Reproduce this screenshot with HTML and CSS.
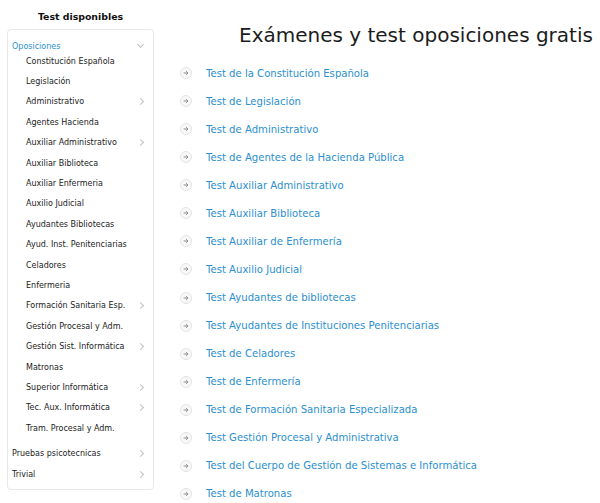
FILE: index.html
```
<!DOCTYPE html>
<html lang="es">
<head>
<meta charset="utf-8">
<title>Test disponibles</title>
<link rel="stylesheet" href="styles.css">
</head>
<body>
<div class="page">
  <aside class="sidebar">
    <h2 class="side-title">Test disponibles</h2>
    <div class="card">
      <div class="group">
        <div class="row top open"><span class="lbl blue">Oposiciones</span><span class="chev down"></span></div>
        <div class="sub">
          <div class="row"><span class="lbl">Constitución Española</span></div>
          <div class="row"><span class="lbl">Legislación</span></div>
          <div class="row"><span class="lbl">Administrativo</span><span class="chev"></span></div>
          <div class="row"><span class="lbl">Agentes Hacienda</span></div>
          <div class="row"><span class="lbl">Auxiliar Administrativo</span><span class="chev"></span></div>
          <div class="row"><span class="lbl">Auxiliar Biblioteca</span></div>
          <div class="row"><span class="lbl">Auxiliar Enfermeria</span></div>
          <div class="row"><span class="lbl">Auxilio Judicial</span></div>
          <div class="row"><span class="lbl">Ayudantes Bibliotecas</span></div>
          <div class="row"><span class="lbl">Ayud. Inst. Penitenciarias</span></div>
          <div class="row"><span class="lbl">Celadores</span></div>
          <div class="row"><span class="lbl">Enfermeria</span></div>
          <div class="row"><span class="lbl">Formación Sanitaria Esp.</span><span class="chev"></span></div>
          <div class="row"><span class="lbl">Gestión Procesal y Adm.</span></div>
          <div class="row"><span class="lbl">Gestión Sist. Informática</span><span class="chev"></span></div>
          <div class="row"><span class="lbl">Matronas</span></div>
          <div class="row"><span class="lbl">Superior Informática</span><span class="chev"></span></div>
          <div class="row"><span class="lbl">Tec. Aux. Informática</span><span class="chev"></span></div>
          <div class="row"><span class="lbl">Tram. Procesal y Adm.</span></div>
        </div>
      </div>
      <div class="row top"><span class="lbl">Pruebas psicotecnicas</span><span class="chev"></span></div>
      <div class="row top"><span class="lbl">Trivial</span><span class="chev"></span></div>
    </div>
  </aside>
  <main class="main">
    <h1 class="title">Exámenes y test oposiciones gratis</h1>
    <ul class="links">
      <li><span class="ico"><svg viewBox="0 0 12 12" width="12" height="12"><path d="M3.6 6h4.4M6.2 4.2 8 6 6.2 7.8" fill="none" stroke="#8a8a8a" stroke-width="1"/></svg></span><a href="#">Test de la Constitución Española</a></li>
      <li><span class="ico"><svg viewBox="0 0 12 12" width="12" height="12"><path d="M3.6 6h4.4M6.2 4.2 8 6 6.2 7.8" fill="none" stroke="#8a8a8a" stroke-width="1"/></svg></span><a href="#">Test de Legislación</a></li>
      <li><span class="ico"><svg viewBox="0 0 12 12" width="12" height="12"><path d="M3.6 6h4.4M6.2 4.2 8 6 6.2 7.8" fill="none" stroke="#8a8a8a" stroke-width="1"/></svg></span><a href="#">Test de Administrativo</a></li>
      <li><span class="ico"><svg viewBox="0 0 12 12" width="12" height="12"><path d="M3.6 6h4.4M6.2 4.2 8 6 6.2 7.8" fill="none" stroke="#8a8a8a" stroke-width="1"/></svg></span><a href="#">Test de Agentes de la Hacienda Pública</a></li>
      <li><span class="ico"><svg viewBox="0 0 12 12" width="12" height="12"><path d="M3.6 6h4.4M6.2 4.2 8 6 6.2 7.8" fill="none" stroke="#8a8a8a" stroke-width="1"/></svg></span><a href="#">Test Auxiliar Administrativo</a></li>
      <li><span class="ico"><svg viewBox="0 0 12 12" width="12" height="12"><path d="M3.6 6h4.4M6.2 4.2 8 6 6.2 7.8" fill="none" stroke="#8a8a8a" stroke-width="1"/></svg></span><a href="#">Test Auxiliar Biblioteca</a></li>
      <li><span class="ico"><svg viewBox="0 0 12 12" width="12" height="12"><path d="M3.6 6h4.4M6.2 4.2 8 6 6.2 7.8" fill="none" stroke="#8a8a8a" stroke-width="1"/></svg></span><a href="#">Test Auxiliar de Enfermería</a></li>
      <li><span class="ico"><svg viewBox="0 0 12 12" width="12" height="12"><path d="M3.6 6h4.4M6.2 4.2 8 6 6.2 7.8" fill="none" stroke="#8a8a8a" stroke-width="1"/></svg></span><a href="#">Test Auxilio Judicial</a></li>
      <li><span class="ico"><svg viewBox="0 0 12 12" width="12" height="12"><path d="M3.6 6h4.4M6.2 4.2 8 6 6.2 7.8" fill="none" stroke="#8a8a8a" stroke-width="1"/></svg></span><a href="#">Test Ayudantes de bibliotecas</a></li>
      <li><span class="ico"><svg viewBox="0 0 12 12" width="12" height="12"><path d="M3.6 6h4.4M6.2 4.2 8 6 6.2 7.8" fill="none" stroke="#8a8a8a" stroke-width="1"/></svg></span><a href="#">Test Ayudantes de Instituciones Penitenciarias</a></li>
      <li><span class="ico"><svg viewBox="0 0 12 12" width="12" height="12"><path d="M3.6 6h4.4M6.2 4.2 8 6 6.2 7.8" fill="none" stroke="#8a8a8a" stroke-width="1"/></svg></span><a href="#">Test de Celadores</a></li>
      <li><span class="ico"><svg viewBox="0 0 12 12" width="12" height="12"><path d="M3.6 6h4.4M6.2 4.2 8 6 6.2 7.8" fill="none" stroke="#8a8a8a" stroke-width="1"/></svg></span><a href="#">Test de Enfermería</a></li>
      <li><span class="ico"><svg viewBox="0 0 12 12" width="12" height="12"><path d="M3.6 6h4.4M6.2 4.2 8 6 6.2 7.8" fill="none" stroke="#8a8a8a" stroke-width="1"/></svg></span><a href="#">Test de Formación Sanitaria Especializada</a></li>
      <li><span class="ico"><svg viewBox="0 0 12 12" width="12" height="12"><path d="M3.6 6h4.4M6.2 4.2 8 6 6.2 7.8" fill="none" stroke="#8a8a8a" stroke-width="1"/></svg></span><a href="#">Test Gestión Procesal y Administrativa</a></li>
      <li><span class="ico"><svg viewBox="0 0 12 12" width="12" height="12"><path d="M3.6 6h4.4M6.2 4.2 8 6 6.2 7.8" fill="none" stroke="#8a8a8a" stroke-width="1"/></svg></span><a href="#">Test del Cuerpo de Gestión de Sistemas e Informática</a></li>
      <li><span class="ico"><svg viewBox="0 0 12 12" width="12" height="12"><path d="M3.6 6h4.4M6.2 4.2 8 6 6.2 7.8" fill="none" stroke="#8a8a8a" stroke-width="1"/></svg></span><a href="#">Test de Matronas</a></li>
    </ul>
  </main>
</div>
</body>
</html>
```
FILE: styles.css
```
* { box-sizing: border-box; }
html, body { margin: 0; padding: 0; background: #fff; }
body { font-family: "DejaVu Sans", Verdana, sans-serif; color: #222; overflow: hidden; }
.page { display: flex; align-items: flex-start; padding-left: 7px; }
.sidebar { width: 147px; flex: none; }
.side-title { margin: 10px 0 0; height: 19px; font-size: 9.4px; font-weight: bold; text-align: center; color: #111; line-height: 14px; }
.card { border: 1px solid #e8e8e8; border-radius: 4px; padding: 11px 0 5px; }
.row { display: flex; align-items: center; justify-content: space-between; height: 20.4px; padding: 0 8px 0 4px; }
.sub .row { padding-left: 18px; }
.lbl { font-size: 8px; color: #222; white-space: nowrap; }
.blue { color: #2b8fd0; }
.group { padding-bottom: 5px; }
.row.top.open { height: 10px; }
.chev { width: 5px; height: 5px; border-top: 1.4px solid #c2c2c2; border-right: 1.4px solid #c2c2c2; transform: rotate(45deg); margin-right: 2px; }
.chev.down { transform: rotate(135deg); margin-top: -3px; }
.main { flex: 1; padding-left: 25px; }
.title { margin: 23px 0 0 60px; font-size: 20px; font-weight: normal; color: #1c1c1c; line-height: 24px; }
.links { list-style: none; margin: 12px 0 0; padding: 0; }
.links li { display: flex; align-items: center; height: 28.07px; }
.ico { width: 12px; height: 12px; border-radius: 50%; border: 1px solid #e4e4e4; background: #f8f8f8; margin-left: 1px; margin-right: 14px; flex: none; display: flex; }
.ico svg { display: block; margin: -1px; }
.links a { font-size: 10.1px; color: #2b8fd0; text-decoration: none; white-space: nowrap; }
```
